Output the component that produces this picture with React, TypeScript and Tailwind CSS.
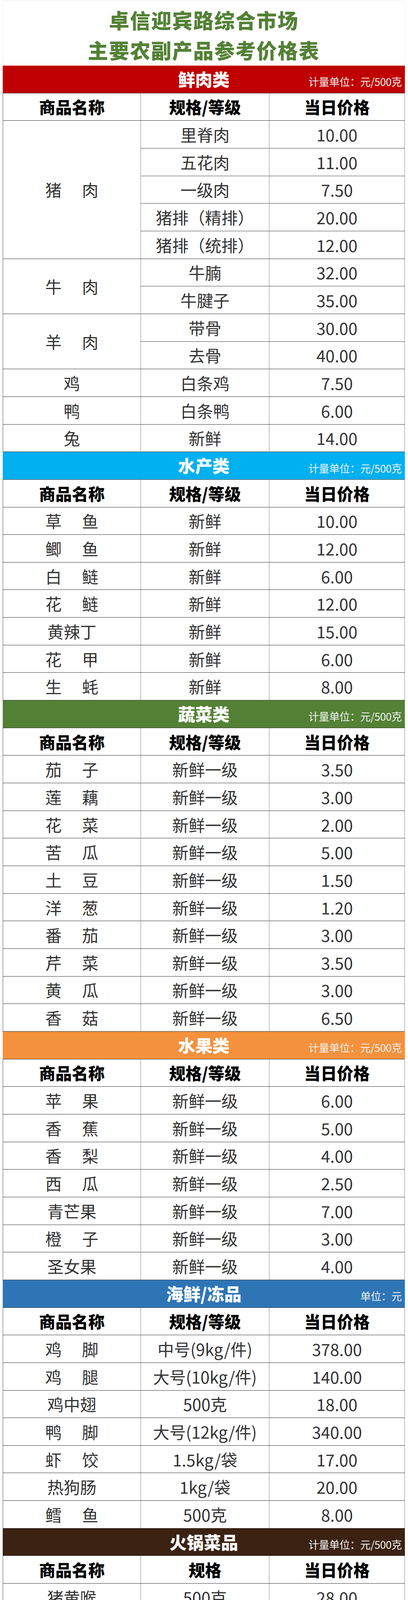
import React from "react";

type Item = [string, string];
type Group = { name: string; items: Item[] };
type Section = {
  title: string;
  bg: string;
  unit: string;
  spec: string;
  groups: Group[];
};

const one = (name: string, spec: string, price: string): Group => ({ name, items: [[spec, price]] });

const sections: Section[] = [
  {
    title: "鲜肉类",
    bg: "bg-[#c00000]",
    unit: "计量单位：元/500克",
    spec: "规格/等级",
    groups: [
      {
        name: "猪 肉",
        items: [
          ["里脊肉", "10.00"],
          ["五花肉", "11.00"],
          ["一级肉", "7.50"],
          ["猪排（精排）", "20.00"],
          ["猪排（统排）", "12.00"],
        ],
      },
      { name: "牛 肉", items: [["牛腩", "32.00"], ["牛腱子", "35.00"]] },
      { name: "羊 肉", items: [["带骨", "30.00"], ["去骨", "40.00"]] },
      one("鸡", "白条鸡", "7.50"),
      one("鸭", "白条鸭", "6.00"),
      one("兔", "新鲜", "14.00"),
    ],
  },
  {
    title: "水产类",
    bg: "bg-[#00b0f0]",
    unit: "计量单位：元/500克",
    spec: "规格/等级",
    groups: [
      one("草 鱼", "新鲜", "10.00"),
      one("鲫 鱼", "新鲜", "12.00"),
      one("白 鲢", "新鲜", "6.00"),
      one("花 鲢", "新鲜", "12.00"),
      one("黄辣丁", "新鲜", "15.00"),
      one("花 甲", "新鲜", "6.00"),
      one("生 蚝", "新鲜", "8.00"),
    ],
  },
  {
    title: "蔬菜类",
    bg: "bg-[#538135]",
    unit: "计量单位：元/500克",
    spec: "规格/等级",
    groups: [
      one("茄 子", "新鲜一级", "3.50"),
      one("莲 藕", "新鲜一级", "3.00"),
      one("花 菜", "新鲜一级", "2.00"),
      one("苦 瓜", "新鲜一级", "5.00"),
      one("土 豆", "新鲜一级", "1.50"),
      one("洋 葱", "新鲜一级", "1.20"),
      one("番 茄", "新鲜一级", "3.00"),
      one("芹 菜", "新鲜一级", "3.50"),
      one("黄 瓜", "新鲜一级", "3.00"),
      one("香 菇", "新鲜一级", "6.50"),
    ],
  },
  {
    title: "水果类",
    bg: "bg-[#f4913d]",
    unit: "计量单位：元/500克",
    spec: "规格/等级",
    groups: [
      one("苹 果", "新鲜一级", "6.00"),
      one("香 蕉", "新鲜一级", "5.00"),
      one("香 梨", "新鲜一级", "4.00"),
      one("西 瓜", "新鲜一级", "2.50"),
      one("青芒果", "新鲜一级", "7.00"),
      one("橙 子", "新鲜一级", "3.00"),
      one("圣女果", "新鲜一级", "4.00"),
    ],
  },
  {
    title: "海鲜/冻品",
    bg: "bg-[#2e75b6]",
    unit: "单位：元",
    spec: "规格/等级",
    groups: [
      one("鸡 脚", "中号(9kg/件)", "378.00"),
      one("鸡 腿", "大号(10kg/件)", "140.00"),
      one("鸡中翅", "500克", "18.00"),
      one("鸭 脚", "大号(12kg/件)", "340.00"),
      one("虾 饺", "1.5kg/袋", "17.00"),
      one("热狗肠", "1kg/袋", "20.00"),
      one("鳕 鱼", "500克", "8.00"),
    ],
  },
  {
    title: "火锅菜品",
    bg: "bg-[#3b2212]",
    unit: "计量单位：元/500克",
    spec: "规格",
    groups: [
      one("猪黄喉", "500克", "28.00"),
      one("毛 肚", "500克", "35.00"),
      one("白千层肚", "500克", "28.00"),
      one("水发鸭肠", "500克", "26.00"),
      one("鱿 鱼", "500克", "23.00"),
      one("鱿鱼须", "500克", "23.00"),
      one("脆皮肠(润香宇)", "550g/包", "12.00"),
      one("梅林午餐肉", "340g/罐", "10.00"),
    ],
  },
  {
    title: "干杂调味品",
    bg: "bg-[#1c4f80]",
    unit: "计量单位：元",
    spec: "规格/等级",
    groups: [
      one("味极鲜", "1.9L/瓶", "20.00"),
      one("酱油(李锦记生抽)", "500ml/瓶", "10.00"),
      one("醋(千禾)", "500ml/瓶", "5.00"),
      one("豆瓣酱(天竹美)", "1kg/瓶", "12.00"),
      one("花椒", "元/500克", "55.00"),
      one("干辣椒", "元/500克", "13.00"),
    ],
  },
  {
    title: "腌腊制品",
    bg: "bg-[#c00000]",
    unit: "计量单位：元/500克",
    spec: "规格/等级",
    groups: [
      one("腌腊香肠", "优级", "20.00"),
      one("腌腊肉", "优级", "22.00"),
      one("腌腊排骨", "优级", "27.00"),
    ],
  },
];

function Name({ text }: { text: string }) {
  if (text.includes(" ")) {
    const [a, b] = text.split(" ");
    return (
      <div className="flex gap-[52px]">
        <span>{a}</span>
        <span>{b}</span>
      </div>
    );
  }
  return <span className="whitespace-nowrap">{text}</span>;
}

function SectionBlock({ s }: { s: Section }) {
  return (
    <div>
      <div
        className={`${s.bg} h-[70.66px] grid grid-cols-[1fr_auto_1fr] items-center border-b border-[#333]`}
      >
        <div />
        <div className="text-white font-black text-[44px] leading-none pb-[2px]">{s.title}</div>
        <div className="justify-self-end pr-[8px] pt-[12px] text-[#f3f3f3] text-[27px] leading-none whitespace-nowrap tracking-[-0.5px]">
          {s.unit}
        </div>
      </div>
      <div className="grid grid-cols-[353px_329px_348px] h-[70.66px] border-b border-[#333] text-black font-black text-[42px] leading-none">
        <div className="flex items-center justify-center border-l border-[#555]">商品名称</div>
        <div className="flex items-center justify-center border-l border-[#888]">{s.spec}</div>
        <div className="flex items-center justify-center border-l border-r border-[#888]">当日价格</div>
      </div>
      {s.groups.map((g, gi) => (
        <div key={gi} className="flex border-b border-[#333] text-[#333] text-[42px] leading-none">
          <div className="w-[353px] shrink-0 flex items-center justify-center border-l border-[#555]">
            <Name text={g.name} />
          </div>
          <div className="flex-1 flex flex-col">
            {g.items.map((it, ii) => (
              <div
                key={ii}
                className={`grid grid-cols-[329px_348px] ${
                  ii < g.items.length - 1 ? "h-[70.66px] border-b border-[#444]" : "h-[69.66px]"
                }`}
              >
                <div className="flex items-center justify-center border-l border-[#888] whitespace-nowrap">
                  {it[0]}
                </div>
                <div className="flex items-center justify-center border-l border-r border-[#888]">
                  {it[1]}
                </div>
              </div>
            ))}
          </div>
        </div>
      ))}
    </div>
  );
}

export default function App() {
  return (
    <div className="w-[1045px] min-h-[5556px] bg-white font-['Noto_Sans_CJK_SC','Noto_Sans',sans-serif]">
      <div className="ml-[7px] w-[1030px]">
        <div className="h-[168px] flex flex-col items-center justify-center gap-[15px] text-[#538135] font-black text-[52px] leading-[62px] tracking-[2px] border-t border-l border-r border-[#eeeeee] pt-[9px]">
          <div>卓信迎宾路综合市场</div>
          <div>主要农副产品参考价格表</div>
        </div>
        {sections.map((s, i) => (
          <SectionBlock key={i} s={s} />
        ))}
      </div>
    </div>
  );
}
